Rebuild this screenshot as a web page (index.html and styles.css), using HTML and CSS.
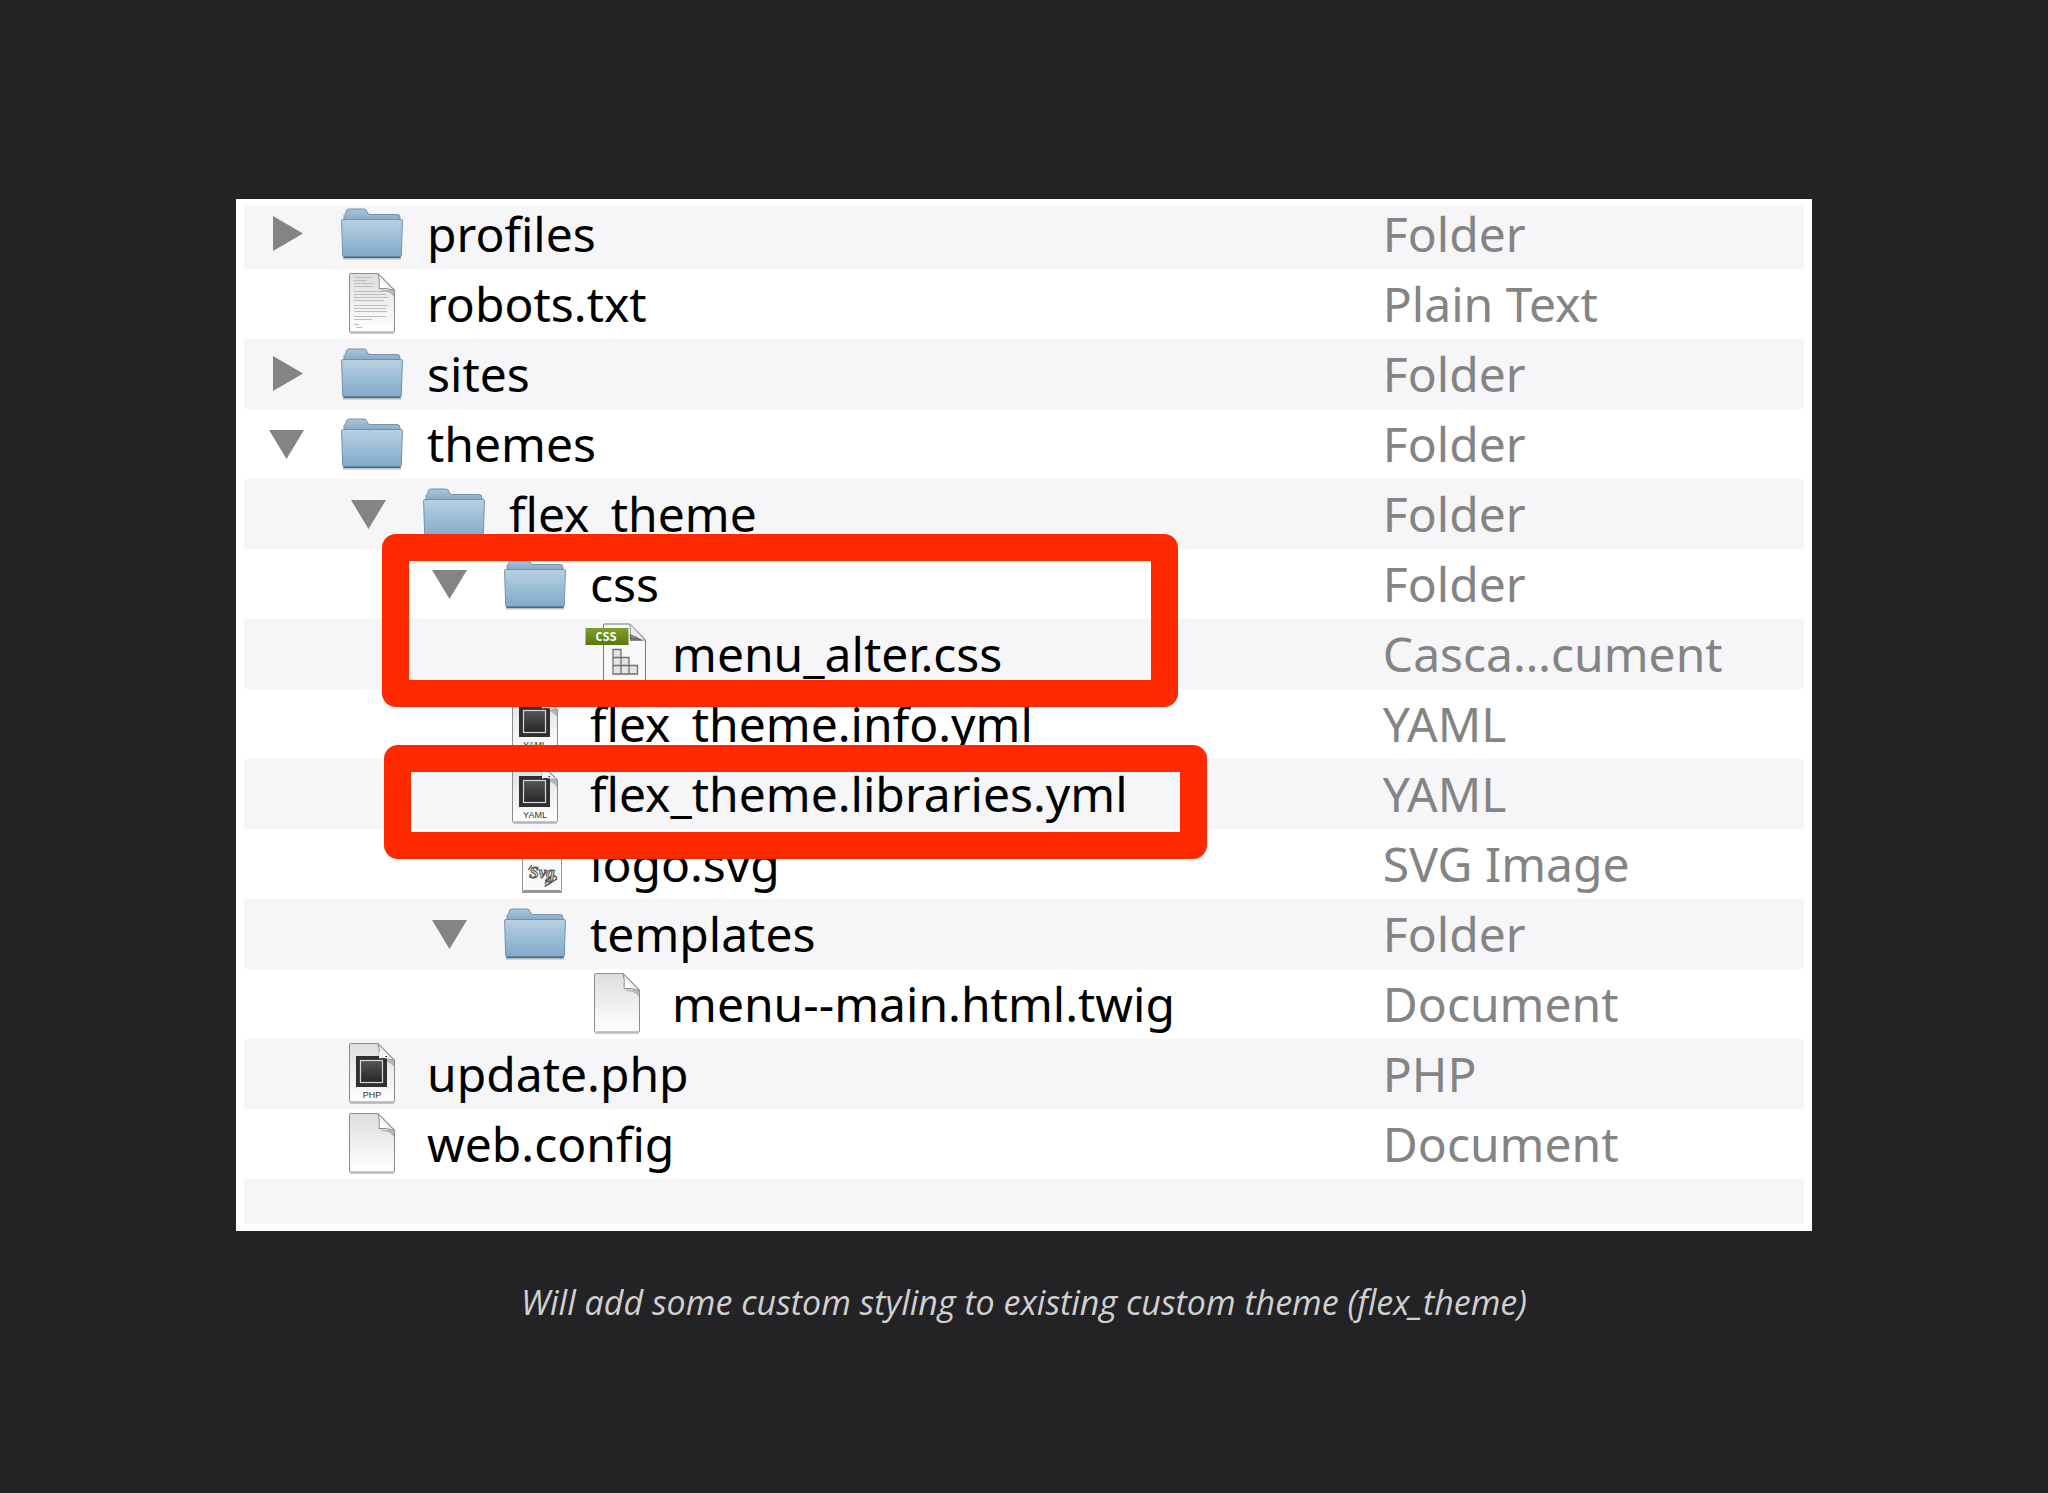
FILE: index.html
```html
<!DOCTYPE html>
<html lang="en">
<head>
  <meta charset="UTF-8">
  <title>Custom theme files</title>
  <link rel="stylesheet" href="styles.css">
</head>
<body>

  <!-- icon sprites -->
  <svg class="sprites" width="0" height="0" aria-hidden="true">
    <defs>
      <linearGradient id="folder-front" x1="0" y1="0" x2="0" y2="1">
        <stop offset="0" stop-color="#b9d0e3"/>
        <stop offset="1" stop-color="#7fabca"/>
      </linearGradient>
      <linearGradient id="folder-back" x1="0" y1="0" x2="0" y2="1">
        <stop offset="0" stop-color="#a9c6dc"/>
        <stop offset="1" stop-color="#86abc6"/>
      </linearGradient>
      <linearGradient id="paper" x1="0" y1="0" x2="0" y2="1">
        <stop offset="0" stop-color="#dedede"/>
        <stop offset="1" stop-color="#ffffff"/>
      </linearGradient>
      <linearGradient id="curl" x1="1" y1="0" x2="0" y2="1">
        <stop offset="0.3" stop-color="#cfcfcf"/>
        <stop offset="0.7" stop-color="#ffffff"/>
      </linearGradient>
      <linearGradient id="screen" x1="0" y1="0" x2="0" y2="1">
        <stop offset="0" stop-color="#555555"/>
        <stop offset="1" stop-color="#262626"/>
      </linearGradient>
      <linearGradient id="banner" x1="0" y1="0" x2="0" y2="1">
        <stop offset="0" stop-color="#82a02b"/>
        <stop offset="1" stop-color="#58780a"/>
      </linearGradient>
    </defs>

    <symbol id="folder" viewBox="0 0 64 64">
      <path d="M3 56.500H61" stroke="#000" stroke-opacity="0.250" stroke-width="2"/>
      <path d="M4 18V13.500Q6 12.500 6.300 9Q6.800 7 9 7H24Q26.500 7 27 9.500Q27.300 12.500 30 12.500H57Q60 12.500 60 15.500V18Z" fill="url(#folder-back)" stroke="#7593ab"/>
      <path d="M2.500 17.500H61.500Q62.500 17.500 62.400 19L61.300 53.500Q61.200 55 60 55H4Q2.800 55 2.700 53.500L1.600 19Q1.500 17.500 2.500 17.500Z" fill="url(#folder-front)" stroke="#7292ab"/>
      <path d="M3.500 55.300H60.500" stroke="#416f93" stroke-width="1.500"/>
    </symbol>

    <symbol id="doc" viewBox="0 0 64 64">
      <path d="M10 61.300H54" stroke="#000" stroke-opacity="0.200" stroke-width="1.500"/>
      <path d="M10.500 1.500H38L54.500 18V59Q54.500 60 53.500 60H10.500Q9.500 60 9.500 59V2.500Q9.500 1.500 10.500 1.500Z" fill="url(#paper)" stroke="#8c8c8c"/>
      <path d="M40 17.500L54 18.500V25Q50 19 42 19Z" fill="#000" fill-opacity="0.220"/>
      <path d="M38 1.500Q40 7 39 16.500Q46 15.500 54.500 18.500Z" fill="url(#curl)" stroke="#8c8c8c"/>
    </symbol>

    <symbol id="text-doc" viewBox="0 0 64 64">
      <use href="#doc"/>
      <path d="M14 5.500H32M14 8.500H27M14 11.500H34M14 14.500H33M14 19.500H47M14 22.500H46M14 25.500H48M14 28.500H44M14 33.500H48M14 36.500H46M14 39.500H47M14 44.500H46M14 47.500H32M14 52.500H19M16 55.500H22" fill="none" stroke="#b8b8b8" stroke-width="0.900"/>
    </symbol>

    <symbol id="code-doc" viewBox="0 0 64 64">
      <use href="#doc"/>
      <rect x="16" y="14" width="31" height="31" fill="#303030"/>
      <rect x="20.500" y="18.500" width="22" height="22" fill="url(#screen)" stroke="#d8d8d8" stroke-width="1.200"/>
      <path d="M39 10V16.500Q43 15.500 49 17Z" fill="#f4f4f4"/>
    </symbol>

    <symbol id="css-doc" viewBox="0 0 64 64">
      <path d="M19.500 2H45L60.500 18V62H18.500V3Q18.500 2 19.500 2Z" fill="#f8f8f8" stroke="#77777b"/>
      <path d="M45 2Q46 8 45 17Q52 16 60.500 18.500Z" fill="#eeeeee" stroke="#98989c"/>
      <path d="M45 12V19L58 19Q52 14 45 12Z" fill="#000" fill-opacity="0.450"/>
      <path d="M28 27.500H36V35.500H44V43.500H52.500V52H28ZM28 35.500H36M28 43.500H44M36 35.500V52M44 43.500V52" fill="#e4e4e6" stroke="#6f6f73" stroke-width="1.300"/>
      <rect x="0.500" y="6" width="43" height="17" fill="url(#banner)"/>
    </symbol>

    <symbol id="svg-doc" viewBox="0 0 64 64">
      <path d="M19 60H59" stroke="#000" stroke-opacity="0.400" stroke-width="2"/>
      <rect x="19.500" y="1.500" width="39" height="57" rx="1" fill="#fafafa" stroke="#929292"/>
      <path d="M42 52Q47 42 52 44T46 52T54 47M29 33L25 38M42 49L52 44" fill="none" stroke="#444" stroke-width="1.200"/>
    </symbol>

    <symbol id="arrow-right" viewBox="0 0 36 36">
      <path d="M4 0L34 17.500L4 35Z" fill="#848484"/>
    </symbol>
    <symbol id="arrow-down" viewBox="0 0 36 36">
      <path d="M0 4H35L17.500 33Z" fill="#848484"/>
    </symbol>
  </svg>

  <figure class="slide">
    <div class="finder">
      <table class="files">
        <tr>
          <td class="name"><div class="entry">
            <button class="toggle" aria-label="Expand profiles"><svg><use href="#arrow-right"/></svg></button>
            <svg class="icon"><use href="#folder"/></svg>profiles
          </div></td>
          <td class="kind">Folder</td>
        </tr>
        <tr>
          <td class="name"><div class="entry">
            <span class="toggle"></span>
            <svg class="icon"><use href="#text-doc"/></svg>robots.txt
          </div></td>
          <td class="kind">Plain Text</td>
        </tr>
        <tr>
          <td class="name"><div class="entry">
            <button class="toggle" aria-label="Expand sites"><svg><use href="#arrow-right"/></svg></button>
            <svg class="icon"><use href="#folder"/></svg>sites
          </div></td>
          <td class="kind">Folder</td>
        </tr>
        <tr>
          <td class="name"><div class="entry">
            <button class="toggle" aria-label="Collapse themes"><svg><use href="#arrow-down"/></svg></button>
            <svg class="icon"><use href="#folder"/></svg>themes
          </div></td>
          <td class="kind">Folder</td>
        </tr>
        <tr>
          <td class="name"><div class="entry level-1">
            <button class="toggle" aria-label="Collapse flex_theme"><svg><use href="#arrow-down"/></svg></button>
            <svg class="icon"><use href="#folder"/></svg>flex_theme
          </div></td>
          <td class="kind">Folder</td>
        </tr>
        <tr>
          <td class="name"><div class="entry level-2">
            <button class="toggle" aria-label="Collapse css"><svg><use href="#arrow-down"/></svg></button>
            <svg class="icon"><use href="#folder"/></svg>css
          </div></td>
          <td class="kind">Folder</td>
        </tr>
        <tr>
          <td class="name"><div class="entry level-3">
            <span class="toggle"></span>
            <svg class="icon" viewBox="0 0 64 64"><use href="#css-doc"/><text x="21" y="19" class="banner-text">CSS</text></svg>menu_alter.css
          </div></td>
          <td class="kind">Casca…cument</td>
        </tr>
        <tr>
          <td class="name"><div class="entry level-2">
            <span class="toggle"></span>
            <svg class="icon" viewBox="0 0 64 64"><use href="#code-doc"/><text x="32" y="56" class="icon-label">YAML</text></svg>flex_theme.info.yml
          </div></td>
          <td class="kind">YAML</td>
        </tr>
        <tr>
          <td class="name"><div class="entry level-2">
            <span class="toggle"></span>
            <svg class="icon" viewBox="0 0 64 64"><use href="#code-doc"/><text x="32" y="56" class="icon-label">YAML</text></svg>flex_theme.libraries.yml
          </div></td>
          <td class="kind">YAML</td>
        </tr>
        <tr>
          <td class="name"><div class="entry level-2">
            <span class="toggle"></span>
            <svg class="icon" viewBox="0 0 64 64"><use href="#svg-doc"/><text x="39" y="46" class="svg-text">Svg</text></svg>logo.svg
          </div></td>
          <td class="kind">SVG Image</td>
        </tr>
        <tr>
          <td class="name"><div class="entry level-2">
            <button class="toggle" aria-label="Collapse templates"><svg><use href="#arrow-down"/></svg></button>
            <svg class="icon"><use href="#folder"/></svg>templates
          </div></td>
          <td class="kind">Folder</td>
        </tr>
        <tr>
          <td class="name"><div class="entry level-3">
            <span class="toggle"></span>
            <svg class="icon"><use href="#doc"/></svg>menu--main.html.twig
          </div></td>
          <td class="kind">Document</td>
        </tr>
        <tr>
          <td class="name"><div class="entry">
            <span class="toggle"></span>
            <svg class="icon" viewBox="0 0 64 64"><use href="#code-doc"/><text x="32" y="56" class="icon-label">PHP</text></svg>update.php
          </div></td>
          <td class="kind">PHP</td>
        </tr>
        <tr>
          <td class="name"><div class="entry">
            <span class="toggle"></span>
            <svg class="icon"><use href="#doc"/></svg>web.config
          </div></td>
          <td class="kind">Document</td>
        </tr>
        <tr class="blank"><td></td><td></td></tr>
      </table>

      <!-- red marker frames over the list -->
      <div class="marker marker-css"></div>
      <div class="marker marker-libraries"></div>
    </div>
    <figcaption>Will add some custom styling to existing custom theme (flex_theme)</figcaption>
  </figure>

</body>
</html>
```
FILE: styles.css
```css
* {
  box-sizing: border-box;
}

body {
  margin: 0;
  min-height: 100vh;
  padding: 199px 236px 0;
  background: #232224;
  border-bottom: 1px solid #dcd9dc;
  font-family: "Lucida Grande", "Noto Sans", sans-serif;
}

.sprites {
  position: absolute;
}

.slide {
  margin: 0;
}

.finder {
  position: relative;
  background: #fff;
  padding: 0 8px 7px;
}

.files {
  width: 100%;
  border-collapse: collapse;
  table-layout: fixed;
  font-size: 48px;
  font-weight: 430;
  line-height: 70px;
  white-space: nowrap;
}

.files td {
  padding: 0;
}

.files tr:nth-child(odd) {
  background: #f6f6f8;
}

/* the list is scrolled a little, so the first stripe is cut */
.files tr:first-child {
  background: linear-gradient(#fff 7px, #f6f6f8 7px);
}

.name {
  width: 73%;
  color: #000;
}

.kind {
  color: #848484;
}

.blank td {
  height: 45px;
}

.entry {
  display: flex;
  align-items: center;
  height: 70px;
  padding-left: 25px;
}

.level-1 { padding-left: 107px; }
.level-2 { padding-left: 188px; }
.level-3 { padding-left: 270px; }

.toggle {
  flex: none;
  width: 36px;
  height: 36px;
  margin-right: 35px;
  padding: 0;
  border: 0;
  background: none;
}

.toggle svg {
  display: block;
  width: 36px;
  height: 36px;
}

.icon {
  flex: none;
  width: 64px;
  height: 64px;
  margin-right: 23px;
}

.icon-label {
  font: 9px "Liberation Sans", sans-serif;
  fill: #333;
  text-anchor: middle;
}

.banner-text {
  font: bold 12px "DejaVu Sans Mono", monospace;
  fill: #fff;
  text-anchor: middle;
}

.svg-text {
  font: italic bold 17px "Liberation Serif", serif;
  fill: #ddd;
  stroke: #555;
  stroke-width: 1px;
  text-anchor: middle;
}

.marker {
  position: absolute;
  border: 27px solid #ff2900;
  border-radius: 14px;
  pointer-events: none;
}

.marker-css {
  left: 146px;
  top: 335px;
  width: 796px;
  height: 173px;
}

.marker-libraries {
  left: 148px;
  top: 546px;
  width: 823px;
  height: 114px;
}

figcaption {
  margin-top: 47px;
  text-align: center;
  font-family: "Source Sans Pro", "Open Sans", sans-serif;
  font-size: 34px;
  font-style: italic;
  line-height: 48px;
  color: #d0d0d0;
}
```
